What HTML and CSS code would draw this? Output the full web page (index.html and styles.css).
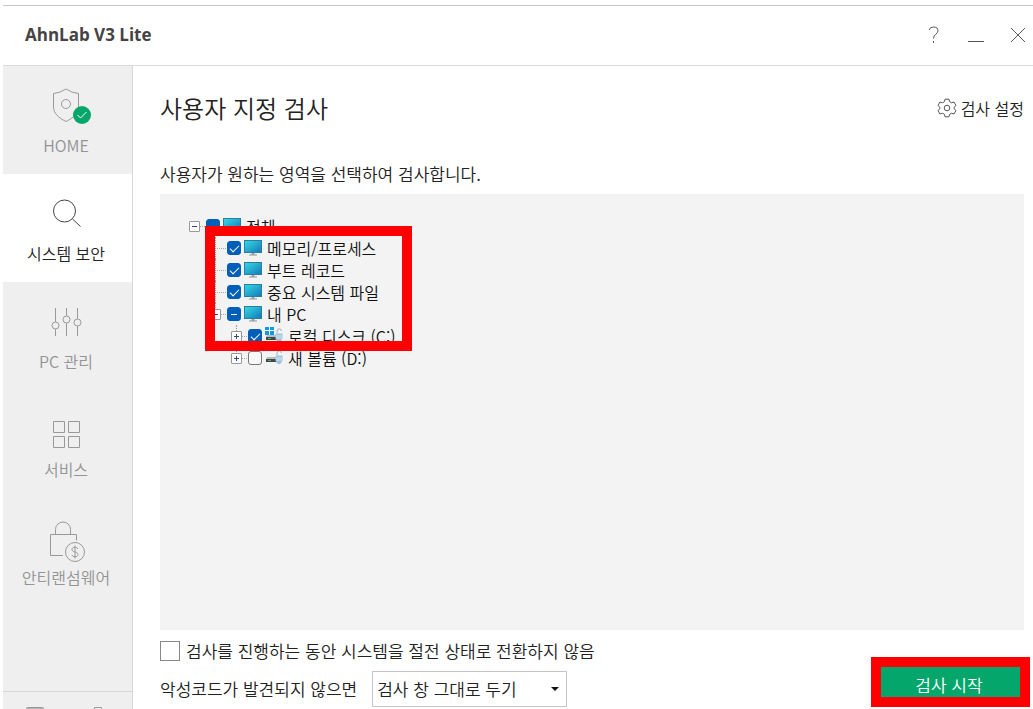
FILE: index.html
```
<!DOCTYPE html>
<html lang="ko">
    <head>
        <meta charset="UTF-8">
        <meta name="viewport" content="width=device-width, initial-scale=1.0">
        <title>AhnLab V3 Lite</title>
        <link rel="stylesheet" href="styles.css">
    </head>
<body>
    <svg class="defs" width="0" height="0" aria-hidden="true">
        <defs>
            <linearGradient id="screen" x1="0" y1="0" x2="1" y2="1">
                <stop offset="0" stop-color="#35dbe6"/>
                <stop offset="1" stop-color="#1378b8"/>
            </linearGradient>
            <symbol id="monitor" viewBox="0 0 18 18">
                <path d="M7.5 13h3v3h-3z" fill="#9aa5ad"/>
                <path d="M5 15.5h8v1H5z" fill="#8c979f"/>
                <rect x="0.5" y="1.5" width="17" height="12" fill="url(#screen)" stroke="#2a7f9e"/>
            </symbol>
            <symbol id="drive" viewBox="0 0 18 18">
                <path d="M2 8h10l1 2H1z" fill="#b9bdc0"/>
                <rect x="1" y="10" width="13" height="3" fill="#40474a"/>
                <rect x="3" y="11" width="3" height="1" fill="#35c24a"/>
                <path d="M12 6V4a2.2 2.2 0 0 1 4.4 0" fill="none" stroke="#9fb0bd"/>
                <path d="M10.5 6.5h7v5q-1 3-3.5 4-2.5-1-3.5-4z" fill="#9cc3dd"/>
                <path d="M11 9h6M11 11h6" stroke="#d8e8f2"/>
            </symbol>
        </defs>
    </svg>

    <div class="window">
        <header class="titlebar">
            <h1>AhnLab V3 Lite</h1>
            <div class="window-buttons">
                <button type="button" aria-label="도움말">
                    <svg width="18" height="18" viewBox="0 0 18 18"><path d="M4 4Q5 1 8.500 1 13 1 13 4.800c0 3-4.500 3.700-4.500 7.700M8.500 15v2"/></svg>
                </button>
                <button type="button" aria-label="최소화">
                    <svg width="18" height="18" viewBox="0 0 18 18"><path d="M1 15.500h16"/></svg>
                </button>
                <button type="button" aria-label="닫기">
                    <svg width="18" height="18" viewBox="0 0 18 18"><path d="M2 2l14 14M16 2L2 16"/></svg>
                </button>
            </div>
        </header>

        <div class="content">
            <nav class="sidebar">
                <a href="#" class="nav-item">
                    <svg width="44" height="44" viewBox="0 0 44 44">
                        <path d="M22 5q6 4 12.500 4.500V23c0 6-5 11-12.500 14.500C14.500 34 9.500 29 9.500 23V9.500Q16 9 22 5z"/>
                        <circle cx="22" cy="20" r="4.500"/>
                        <circle class="badge" cx="38" cy="31" r="9"/>
                        <path class="badge-tick" d="M33.500 31l3 3 6-6"/>
                    </svg>
                    <span>HOME</span>
                </a>
                <a href="#" class="nav-item active">
                    <svg width="44" height="44" viewBox="0 0 44 44">
                        <circle cx="20.500" cy="19" r="11"/>
                        <path d="M28.500 27l8 7.500"/>
                    </svg>
                    <span>시스템 보안</span>
                </a>
                <a href="#" class="nav-item">
                    <svg width="44" height="44" viewBox="0 0 44 44">
                        <path d="M11.500 8v14M11.500 29v7M22.500 8v8M22.500 23v13M33.500 8v11M33.500 26v10"/>
                        <circle cx="11.500" cy="25.500" r="3.500"/>
                        <circle cx="22.500" cy="19.500" r="3.500"/>
                        <circle cx="33.500" cy="22.500" r="3.500"/>
                    </svg>
                    <span>PC 관리</span>
                </a>
                <a href="#" class="nav-item">
                    <svg width="44" height="44" viewBox="0 0 44 44">
                        <path d="M9.500 13.500h11v11h-11zM24.500 13.500h11v11h-11zM9.500 28.500h11v11h-11zM24.500 28.500h11v11h-11z"/>
                    </svg>
                    <span>서비스</span>
                </a>
                <a href="#" class="nav-item">
                    <svg width="44" height="44" viewBox="0 0 44 44">
                        <path d="M11.500 18v-4.500a7.500 7.500 0 0 1 15 0V18M19 39.500H6.500v-21h26v6"/>
                        <circle cx="31" cy="36" r="9.500"/>
                        <path d="M34 33q-1-1.800-3-1.800c-4 0-4 4.300 0 4.800s4 4.800 0 4.800q-2.500 0-3.200-1.800M31 29.500v13"/>
                    </svg>
                    <span>안티랜섬웨어</span>
                </a>
                <div class="sidebar-footer">
                    <svg width="18" height="18" viewBox="0 0 18 18"><rect x="0.500" y="1.500" width="17" height="12" rx="1" fill="#b4b4b4"/></svg>
                    <svg width="18" height="18" viewBox="0 0 18 18"><path d="M5.500 8V1.500h7V8M1 8h16"/></svg>
                </div>
            </nav>

            <main class="page">
                <div class="page-head">
                    <h2>사용자 지정 검사</h2>
                    <a href="#" class="settings">
                        <svg width="20" height="20" viewBox="0 0 20 20">
                            <path d="M8 1.200h4l.6 2.500 1.900 1.100 2.500-.8 2 3.500-1.900 1.700v1.600l1.900 1.700-2 3.500-2.500-.8-1.900 1.100-.6 2.500H8l-.6-2.500-1.900-1.100-2.500.8-2-3.500 1.900-1.700V9.200L1 7.500 3 4l2.500.8 1.900-1.100z"/>
                            <circle cx="10" cy="10" r="2.800"/>
                        </svg>
                        <span>검사 설정</span>
                    </a>
                </div>
                <p class="description">사용자가 원하는 영역을 선택하여 검사합니다.</p>

                <div class="panel">
                    <div class="tree">
                        <div class="row">
                            <button type="button" class="toggle" aria-label="접기"></button>
                            <input type="checkbox" id="all" class="partial">
                            <label for="all"><svg width="18" height="18"><use href="#monitor"/></svg>전체</label>
                        </div>
                        <ul>
                            <li class="row">
                                <input type="checkbox" id="memory" checked>
                                <label for="memory"><svg width="18" height="18"><use href="#monitor"/></svg>메모리/프로세스</label>
                            </li>
                            <li class="row">
                                <input type="checkbox" id="boot" checked>
                                <label for="boot"><svg width="18" height="18"><use href="#monitor"/></svg>부트 레코드</label>
                            </li>
                            <li class="row">
                                <input type="checkbox" id="system" checked>
                                <label for="system"><svg width="18" height="18"><use href="#monitor"/></svg>중요 시스템 파일</label>
                            </li>
                            <li>
                                <div class="row">
                                    <button type="button" class="toggle" aria-label="접기"></button>
                                    <input type="checkbox" id="pc" class="partial">
                                    <label for="pc"><svg width="18" height="18"><use href="#monitor"/></svg>내 PC</label>
                                </div>
                                <ul>
                                    <li class="row">
                                        <button type="button" class="toggle closed" aria-label="펼치기"></button>
                                        <input type="checkbox" id="disk-c" checked>
                                        <label for="disk-c">
                                            <svg width="18" height="18"><use href="#drive"/><path d="M0 0h4v3H0zM5 0h4v3H5zM0 4h4v4H0zM5 4h4v4H5z" fill="#0e9be0"/></svg>로컬 디스크 (C:)
                                        </label>
                                    </li>
                                    <li class="row">
                                        <button type="button" class="toggle closed" aria-label="펼치기"></button>
                                        <input type="checkbox" id="disk-d">
                                        <label for="disk-d"><svg width="18" height="18"><use href="#drive"/></svg>새 볼륨 (D:)</label>
                                    </li>
                                </ul>
                            </li>
                        </ul>
                        <div class="highlight highlight-tree"></div>
                    </div>
                </div>

                <div class="bottom">
                    <div class="options">
                        <div class="option">
                            <input type="checkbox" id="no-sleep">
                            <label for="no-sleep">검사를 진행하는 동안 시스템을 절전 상태로 전환하지 않음</label>
                        </div>
                        <div class="option">
                            <label for="after-scan">악성코드가 발견되지 않으면</label>
                            <div class="select-box">
                                <select id="after-scan">
                                    <option>검사 창 그대로 두기</option>
                                </select>
                            </div>
                        </div>
                    </div>
                    <div class="start">
                        <button type="button" class="start-btn">검사 시작</button>
                        <div class="highlight highlight-start"></div>
                    </div>
                </div>
            </main>
        </div>
    </div>
</body>
</html>
```
FILE: styles.css
```
* {
    box-sizing: border-box;
}
body {
    margin: 0;
    background: #fff;
    color: #222;
    font-family: "Noto Sans CJK KR", sans-serif;
    font-size: 17px;
    font-weight: 350;
}
h1, h2, p, ul {
    margin: 0;
    padding: 0;
}
ul {
    list-style: none;
}
a {
    color: inherit;
    text-decoration: none;
}
button, select {
    font: inherit;
    color: inherit;
    border: none;
    padding: 0;
    cursor: pointer;
}
svg {
    display: block;
    flex: none;
    fill: none;
}
.defs {
    position: absolute;
}
.window {
    display: flex;
    flex-direction: column;
    height: 100vh;
    min-height: 640px;
    padding: 5px 0 0 3px;
    overflow: hidden;
}

/* title bar */
.titlebar {
    display: flex;
    align-items: center;
    justify-content: space-between;
    flex: none;
    height: 61px;
    padding: 0 6px 2px 22px;
    border-top: 1px solid #c8c8c8;
    border-bottom: 1px solid #dadada;
}
.titlebar h1 {
    font-family: "Open Sans", sans-serif;
    font-size: 17px;
    font-weight: 700;
    color: #444;
}
.window-buttons {
    display: flex;
    gap: 24px;
}
.window-buttons button {
    background: none;
}
.window-buttons svg {
    stroke: #555;
}

/* sidebar */
.content {
    display: flex;
    flex: 1;
    min-height: 0;
}
.sidebar {
    display: flex;
    flex-direction: column;
    flex: none;
    width: 130px;
    background: #efefef;
    border-right: 1px solid #d6d6d6;
}
.nav-item {
    display: flex;
    flex-direction: column;
    align-items: center;
    height: 108px;
    padding: 18px 3px 0 0;
    gap: 5px;
    color: #949494;
    font-size: 16px;
    line-height: 24px;
}
.nav-item svg {
    overflow: visible;
    stroke: #999;
}
.nav-item.active {
    background: #fff;
    color: #222;
}
.nav-item.active svg {
    stroke: #444;
}
.nav-item .badge {
    fill: #05a66b;
    stroke: none;
}
.nav-item .badge-tick {
    stroke: #fff;
}
.sidebar-footer {
    display: flex;
    justify-content: space-around;
    height: 18px;
    margin-top: auto;
    padding: 14px 3px 0 0;
    border-top: 1px solid #d6d6d6;
    overflow: hidden;
}
.sidebar-footer svg {
    stroke: #999;
}

/* page */
.page {
    display: flex;
    flex-direction: column;
    flex: 1;
    min-width: 0;
    padding: 26px 9px 2px 27px;
}
.page-head {
    display: flex;
    align-items: center;
    justify-content: space-between;
}
.page-head h2 {
    font-size: 24px;
    font-weight: 350;
    line-height: 32px;
}
.settings {
    display: flex;
    align-items: center;
    gap: 4px;
    font-size: 16px;
    line-height: 24px;
}
.settings svg {
    stroke: #555;
    stroke-linejoin: round;
}
.description {
    margin-top: 38px;
    line-height: 24px;
}
.panel {
    flex: 1;
    min-height: 0;
    margin-top: 8px;
    padding: 21px 29px;
    background: #f3f3f3;
}

/* scan target tree */
.tree {
    position: relative;
    color: #111;
    font-size: 16px;
}
.tree ul {
    padding-left: 21px;
}
.tree ul > li {
    position: relative;
}
.tree ul > li::before {
    content: "";
    position: absolute;
    left: 5px;
    top: 0;
    height: 22px;
    border-left: 1px dotted #999;
}
.tree ul > li:last-child::before {
    height: 11px;
}
.row {
    display: flex;
    align-items: center;
    height: 22px;
    padding-left: 17px;
    background: linear-gradient(90deg, #aaa 1px, transparent 1px) 5px 11px / 2px 1px repeat-x;
}
.row > * {
    position: relative;
}
.row label {
    display: flex;
    align-items: center;
    flex: 1;
    gap: 5px;
    padding-left: 3px;
    line-height: 22px;
    white-space: nowrap;
    background: #f3f3f3;
}
.toggle {
    width: 11px;
    height: 11px;
    margin-left: -17px;
    margin-right: 6px;
    border: 1px solid #999;
    border-radius: 1px;
    background: linear-gradient(#33478f, #33478f) center / 5px 1px no-repeat, #fff;
}
.toggle.closed {
    background: linear-gradient(#33478f, #33478f) center / 5px 1px no-repeat, linear-gradient(#33478f, #33478f) center / 1px 5px no-repeat, #fff;
}
.row input {
    display: grid;
    place-items: center;
    appearance: none;
    flex: none;
    width: 14px;
    height: 14px;
    margin: 0;
    border: 1px solid #777;
    border-radius: 3px;
    background: #f8f8f8;
}
.row input:checked, .row input.partial {
    border-color: #005fb8;
    background: #005fb8;
}
.row input:checked::after {
    content: "";
    width: 8px;
    height: 4px;
    margin-bottom: 2px;
    border: solid #fff;
    border-width: 0 0 1px 1px;
    transform: rotate(-45deg);
}
.row input.partial::after {
    content: "";
    width: 6px;
    height: 1px;
    background: #fff;
}

/* red marker frames */
.highlight {
    position: absolute;
    border: 10px solid #f00;
    pointer-events: none;
}
.highlight-tree {
    left: 16px;
    top: 11px;
    width: 207px;
    height: 125px;
}
.highlight-start {
    inset: -4px -6px 0 -3px;
}

/* bottom options */
.bottom {
    display: flex;
    align-items: flex-end;
    justify-content: space-between;
    margin-top: 9px;
}
.options {
    display: flex;
    flex-direction: column;
    gap: 8px;
}
.option {
    display: flex;
    align-items: center;
    line-height: 24px;
}
.option input {
    appearance: none;
    width: 20px;
    height: 20px;
    margin: 0 6px 0 0;
    border: 1px solid #888;
    background: #fff;
}
.option input:checked {
    background: #05a66b;
}
.select-box {
    display: flex;
    align-items: center;
    position: relative;
    margin-left: 15px;
}
.select-box::after {
    content: "";
    position: absolute;
    right: 8px;
    border: 4px solid transparent;
    border-top-color: #111;
    border-bottom: none;
    pointer-events: none;
}
.select-box select {
    appearance: none;
    width: 195px;
    height: 36px;
    padding: 0 4px;
    border: 1px solid #c4c4c4;
    background: #fff;
}
.start {
    position: relative;
}
.start-btn {
    display: block;
    width: 150px;
    height: 46px;
    background: #05a66b;
    color: #fff;
}
```
